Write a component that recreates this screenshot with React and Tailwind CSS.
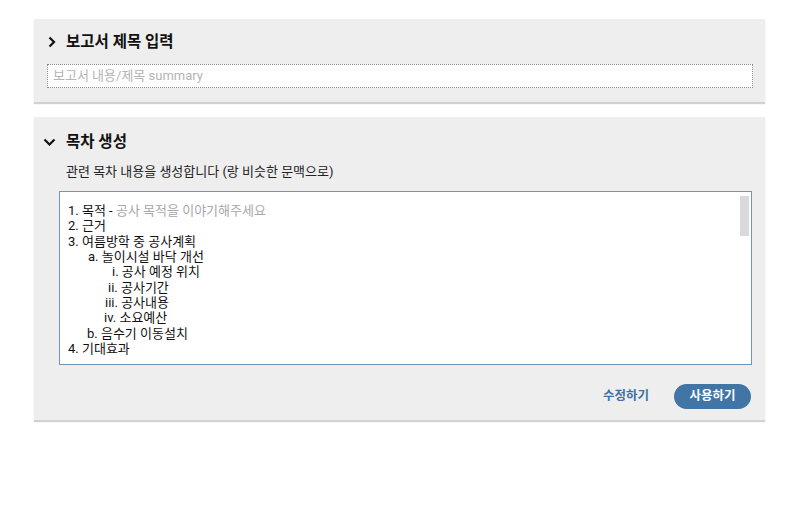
const OUTLINE = [
  { text: '1. 목적 - ', hint: '공사 목적을 이야기해주세요', indent: 'pl-0' },
  { text: '2. 근거', indent: 'pl-0' },
  { text: '3. 여름방학 중 공사계획', indent: 'pl-0' },
  { text: 'a. 놀이시설 바닥 개선', indent: 'pl-[20px]' },
  { text: 'i. 공사 예정 위치', indent: 'pl-[44px]' },
  { text: 'ii. 공사기간', indent: 'pl-[40px]' },
  { text: 'iii. 공사내용', indent: 'pl-[37px]' },
  { text: 'iv. 소요예산', indent: 'pl-[36px]' },
  { text: 'b. 음수기 이동설치', indent: 'pl-[19px]' },
  { text: '4. 기대효과', indent: 'pl-0' }
]

function ChevronRight() {
  return (
    <svg width="12" height="12" viewBox="0 0 12 12" fill="none">
      <path d="M3.5 1.5 L8 6 L3.5 10.5" stroke="#111" strokeWidth="2.2" />
    </svg>
  )
}

function ChevronDown() {
  return (
    <svg width="13" height="12" viewBox="0 0 13 12" fill="none">
      <path d="M1.5 3.5 L6.5 8.5 L11.5 3.5" stroke="#111" strokeWidth="2.2" />
    </svg>
  )
}

export default function App() {
  return (
    <div className="w-[802px] h-[516px] bg-white pt-[19px] pl-[34px] font-['Roboto','Noto_Sans_CJK_KR',sans-serif]">
      <section className="w-[731px] bg-[#eeeeee] shadow-[0_2px_1px_rgba(0,0,0,0.18)] px-[12px] pt-[13px] pb-[14px]">
        <h2 className="flex items-center gap-[8px] text-[15.5px] font-bold text-[#111] leading-[20px]">
          <ChevronRight />
          보고서 제목 입력
        </h2>
        <div className="mt-[12px] ml-[1px] h-[24px] bg-white border border-dotted border-[#888] flex items-center px-[5px]">
          <span className="text-[13px] leading-[16px] text-[#b4b4b4]">보고서 내용/제목 summary</span>
        </div>
      </section>

      <section className="mt-[15px] w-[731px] bg-[#eeeeee] shadow-[0_2px_1px_rgba(0,0,0,0.18)] px-[9px] pt-[15px] pb-[11px]">
        <h2 className="flex items-center gap-[10px] text-[15.5px] font-bold text-[#111] leading-[20px]">
          <ChevronDown />
          목차 생성
        </h2>
        <p className="mt-[11px] ml-[23px] text-[13px] text-[#222] leading-[18px]">
          관련 목차 내용을 생성합니다 (랑 비슷한 문맥으로)
        </p>
        <div className="relative mt-[10px] ml-[16px] mr-[4px] h-[174px] bg-white border border-[#6f94bd] pl-[8px] pt-[11px]">
          <div className="absolute right-[2px] top-[4px] w-[9px] h-[40px] bg-[#d9d9d9]" />
          {OUTLINE.map((line, i) => (
            <div key={i} className={`${line.indent} text-[13px] leading-[15.35px] text-[#111]`}>
              {line.text}
              {line.hint && <span className="text-[#a8a8a8]">{line.hint}</span>}
            </div>
          ))}
        </div>
        <div className="mt-[19px] mr-[5px] flex items-center justify-end gap-[25px]">
          <button className="text-[12.5px] font-bold text-[#3d72a4]">수정하기</button>
          <button className="h-[25px] w-[77px] rounded-full bg-[#4075a6] text-white text-[12.5px] font-bold">
            사용하기
          </button>
        </div>
      </section>
    </div>
  )
}
